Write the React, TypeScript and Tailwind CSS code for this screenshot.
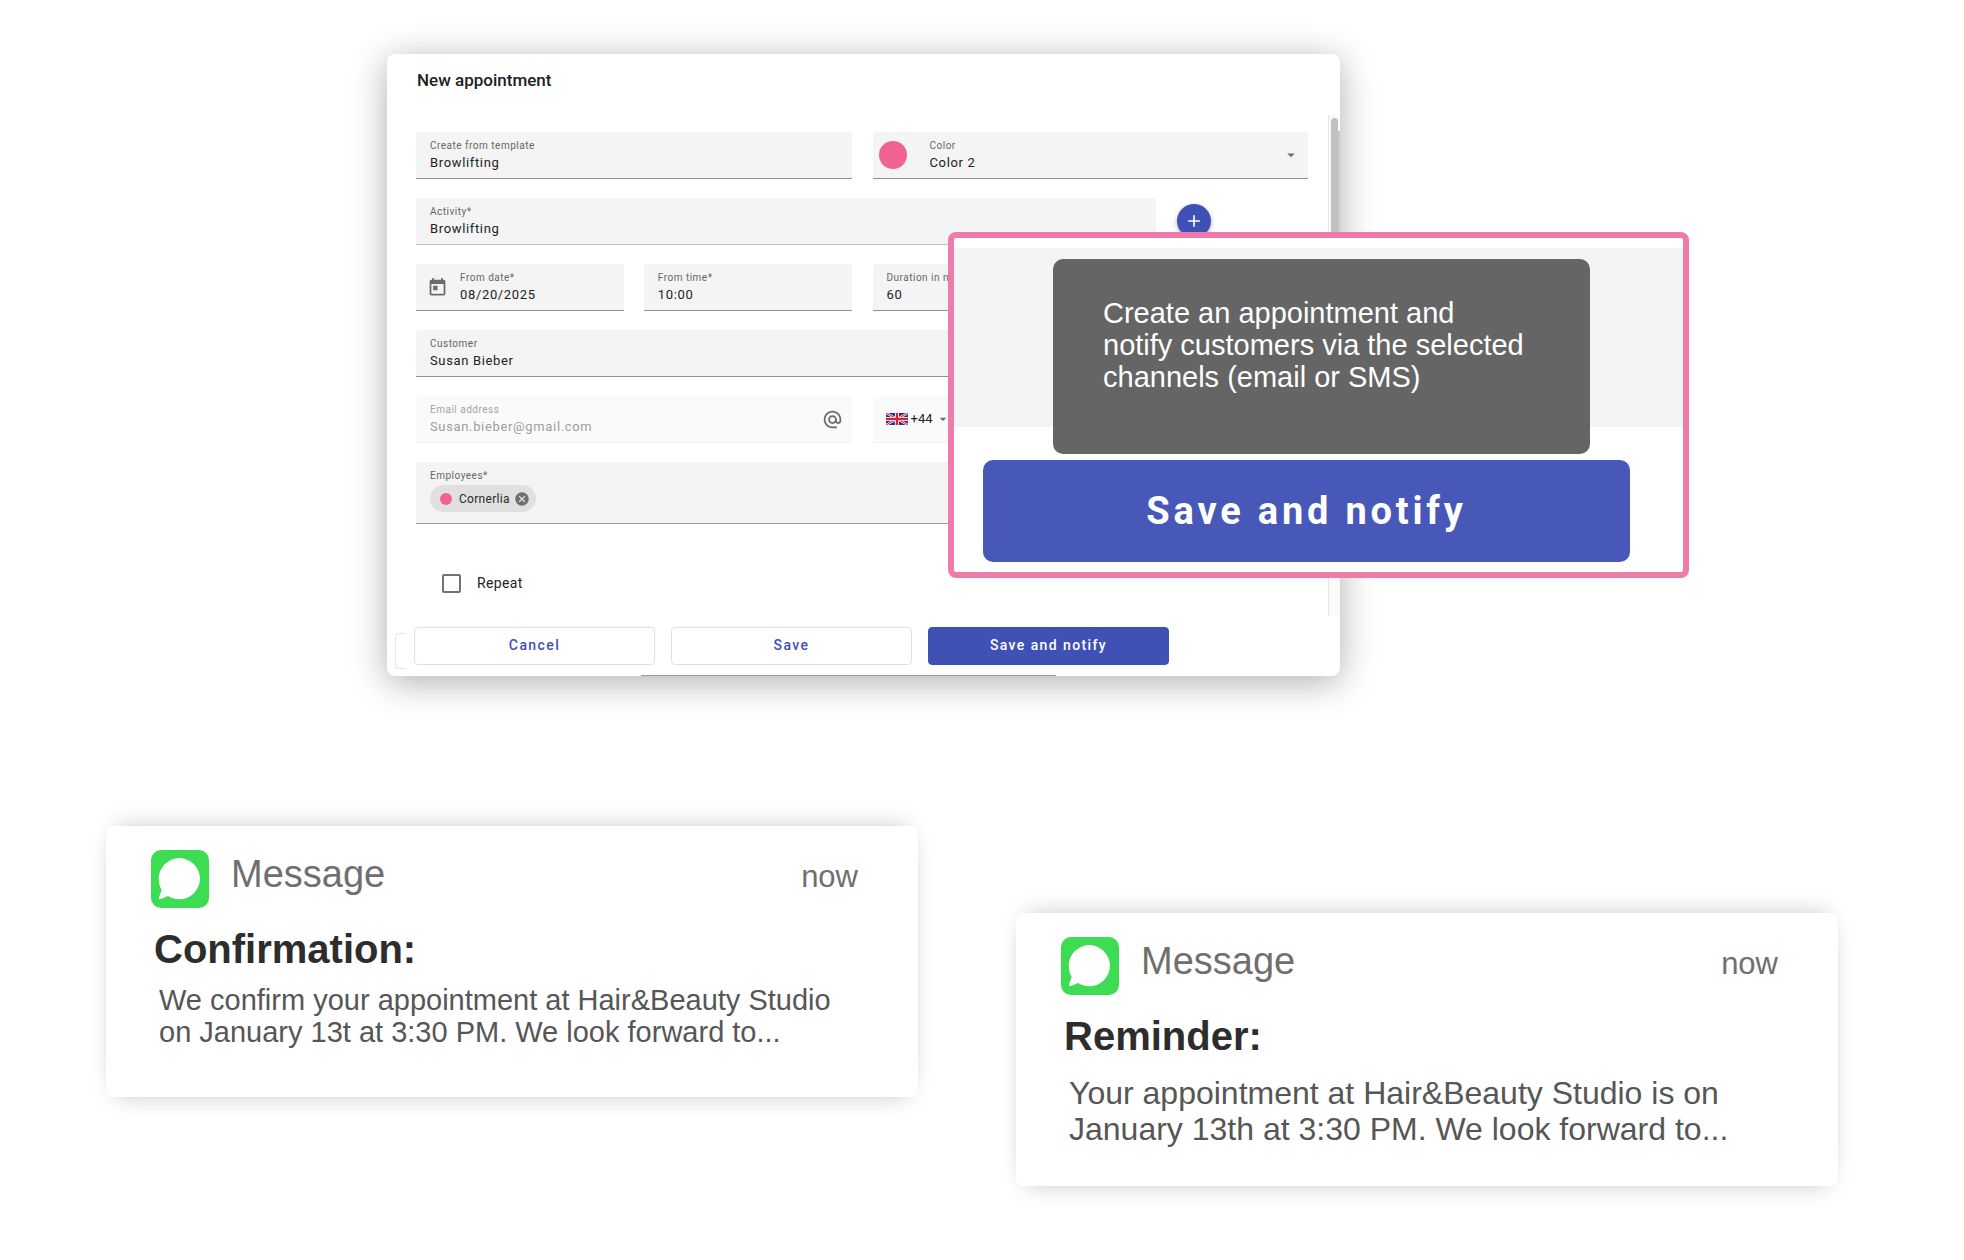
import type { ReactNode } from "react";
import { MdAdd, MdAlternateEmail, MdArrowDropDown, MdCancel, MdToday } from "react-icons/md";

const labelText = "block text-[10px] leading-3 tracking-wider";
const valueText = "mt-[3px] block w-full bg-transparent p-0 text-[13px] leading-4 tracking-wider outline-none";

function Shell({ children, light, className = "" }: { children: ReactNode; light?: boolean; className?: string }) {
  return (
    <div
      className={`flex items-center rounded-t border-b bg-[#f4f4f4] ${light ? "border-[#bdbdbd]" : "border-[#8f8f8f]"} ${className}`}
    >
      {children}
    </div>
  );
}

function TextField({
  id,
  label,
  value,
  icon,
  light,
  className = "",
}: {
  id: string;
  label: string;
  value: string;
  icon?: ReactNode;
  light?: boolean;
  className?: string;
}) {
  return (
    <Shell light={light} className={className}>
      {icon}
      <div className={`min-w-0 flex-1 pt-2 pr-3 pb-[7px] ${icon ? "pl-3" : "pl-[14px]"}`}>
        <label htmlFor={id} className={`${labelText} text-[#666]`}>
          {label}
        </label>
        <input id={id} defaultValue={value} className={`${valueText} text-[#222]`} />
      </div>
    </Shell>
  );
}

function UkFlag() {
  return (
    <svg viewBox="0 0 22 12" className="h-3 w-[22px]" aria-label="United Kingdom">
      <rect width="22" height="12" fill="#1f3a83" />
      <path d="M0 0L22 12M22 0L0 12" stroke="#fff" strokeWidth="2.2" />
      <path d="M0 0L22 12M22 0L0 12" stroke="#d8203a" strokeWidth="1" />
      <path d="M11 0V12M0 6H22" stroke="#fff" strokeWidth="4" />
      <path d="M11 0V12M0 6H22" stroke="#d8203a" strokeWidth="2.4" />
    </svg>
  );
}

function MessageIcon() {
  return (
    <svg viewBox="0 0 58 58" className="size-[58px] shrink-0" aria-hidden="true">
      <rect width="58" height="58" rx="10" fill="#3ddc52" />
      <circle cx="28.3" cy="28.7" r="20.6" fill="#fff" />
      <path d="M8.5 34C9 37 10 38.3 10.6 39.6C10.6 42.500 7.800 45.500 7.900 49.200C11 49 14 47.200 17 46L24 44L14 32Z" fill="#fff" />
    </svg>
  );
}

function AppointmentDialog() {
  return (
    <section
      aria-labelledby="dialog-title"
      className="relative col-start-2 rounded-lg bg-white font-[Roboto,sans-serif] shadow-[0_6px_36px_rgba(0,0,0,0.32)]"
    >
      <h1 id="dialog-title" className="pt-[14px] pb-[23px] pl-[30px] text-[17px] leading-6 font-medium text-[#212121]">
        New appointment
      </h1>

      <div className="flex">
        <form className="flex min-w-0 flex-1 flex-col gap-[19px] pt-[17px] pr-5 pb-[23px] pl-[29px]">
          <div className="grid grid-cols-2 gap-[21px]">
            <TextField id="template" label="Create from template" value="Browlifting" />
            <Shell>
              <span className="ml-[6px] size-7 shrink-0 rounded-full bg-[#f06292]" />
              <div className="min-w-0 flex-1 pt-2 pb-[7px] pl-[23px]">
                <label htmlFor="color" className={`${labelText} text-[#666]`}>
                  Color
                </label>
                <select id="color" className={`${valueText} appearance-none text-[#222]`}>
                  <option>Color 2</option>
                </select>
              </div>
              <MdArrowDropDown className="mr-2 size-[18px] text-[#6b6b6b]" />
            </Shell>
          </div>

          <div className="flex items-start gap-[21px] pr-[97px]">
            <TextField id="activity" label="Activity*" value="Browlifting" light className="flex-1" />
            <button
              type="button"
              aria-label="Add activity"
              className="mt-[6px] flex size-[34px] items-center justify-center rounded-full bg-[#3f51b5] text-white shadow-[0_2px_5px_rgba(0,0,0,0.3)]"
            >
              <MdAdd className="size-5" />
            </button>
          </div>

          <div className="grid grid-cols-2 gap-[21px]">
            <div className="grid grid-cols-2 gap-5">
              <TextField
                id="date"
                label="From date*"
                value="08/20/2025"
                icon={<MdToday className="ml-[11px] size-[21px] shrink-0 text-[#6b6b6b]" />}
              />
              <TextField id="time" label="From time*" value="10:00" />
            </div>
            <TextField id="duration" label="Duration in minutes*" value="60" />
          </div>

          <TextField id="customer" label="Customer" value="Susan Bieber" />

          <div className="grid grid-cols-2 gap-[21px]">
            <div className="flex items-center rounded-t border-b border-[#f0f0f0] bg-[#fafafa]">
              <div className="min-w-0 flex-1 pt-2 pb-[7px] pl-[14px]">
                <label htmlFor="email" className={`${labelText} text-[#a3a3a3]`}>
                  Email address
                </label>
                <input id="email" disabled defaultValue="Susan.bieber@gmail.com" className={`${valueText} text-[#9e9e9e]`} />
              </div>
              <MdAlternateEmail className="mr-[9px] size-[21px] text-[#6b6b6b]" />
            </div>
            <div className="flex items-center rounded-t border-b border-[#f0f0f0] bg-[#fafafa] pl-[13px]">
              <UkFlag />
              <select aria-label="Country code" className="ml-[3px] w-6 appearance-none bg-transparent text-[13px] leading-4 text-[#222]">
                <option>+44</option>
              </select>
              <MdArrowDropDown className="size-4 text-[#6b6b6b]" />
            </div>
          </div>

          <div className="rounded-t border-b border-[#a0a0a0] bg-[#f4f4f4] pt-2 pb-[11px] pl-[14px]">
            <span className={`${labelText} text-[#666]`}>Employees*</span>
            <div className="mt-[3px] flex">
              <span className="flex h-[27px] items-center rounded-full bg-[#e0e0e0] pr-[6px] pl-[10px] text-xs leading-4 tracking-wide text-[#2b2b2b]">
                <span className="mr-[7px] size-3 rounded-full bg-[#f06292]" />
                Cornerlia
                <button type="button" aria-label="Remove Cornerlia" className="ml-1 text-[#6f6f6f]">
                  <MdCancel className="size-4" />
                </button>
              </span>
            </div>
          </div>

          <label className="mt-[30px] flex items-center gap-4 pl-[26px] text-sm leading-5 tracking-wide text-[#222]">
            <input type="checkbox" className="size-[19px] appearance-none rounded-xs border-2 border-[#737373] bg-white" />
            Repeat
          </label>
        </form>

        <div className="flex w-3 border-l border-[#e6e6e6] bg-[#fafafa] pt-[3px]">
          <span className="ml-[2px] h-60 w-[7px] rounded-full bg-[#c1c1c1]" />
          <span className="mt-[13px] h-60 w-[2px] bg-[#c9c9c9]" />
        </div>
      </div>

      <footer className="grid grid-cols-3 gap-4 pt-[11px] pr-[171px] pb-[11px] pl-[27px] text-sm leading-[18px] font-medium tracking-widest">
        <button type="button" className="rounded border border-[#e0e0e0] pt-2 pb-[10px] text-[#3f51b5]">
          Cancel
        </button>
        <button type="button" className="rounded border border-[#e0e0e0] pt-2 pb-[10px] text-[#3f51b5]">
          Save
        </button>
        <button type="button" className="rounded border border-[#3f51b5] bg-[#3f51b5] pt-2 pb-[10px] text-white">
          Save and notify
        </button>
      </footer>
      <span className="absolute bottom-[7px] left-2 h-9 w-[11px] rounded-l border border-r-0 border-[#e6e6e6]" />
      <span className="absolute bottom-0 left-[254px] h-px w-[415px] bg-[#9a9a9a]" />

      <Callout />
    </section>
  );
}

function Callout() {
  return (
    <div className="absolute top-[178px] left-[561px] w-[741px] rounded-lg border-[6px] border-[#ee7ba8] bg-white pt-[10px] pb-[10px]">
      <div className="h-[179px] bg-[#f4f4f4] pt-[11px] pr-[93px] pl-[99px]">
        <p
          role="tooltip"
          className="h-[195px] rounded-[10px] bg-[#656565] pt-[38px] pl-[50px] font-['Liberation_Sans',Arial,sans-serif] text-[29px] leading-8 text-white"
        >
          Create an appointment and
          <br />
          notify customers via the selected
          <br />
          channels (email or SMS)
        </p>
      </div>
      <div className="mt-[33px] pr-[53px] pl-[29px]">
        <button type="button" className="w-full rounded-[10px] bg-[#4758b8] py-[27px] text-[38px] leading-[48px] font-bold tracking-widest text-white">
          Save and notify
        </button>
      </div>
    </div>
  );
}

function MessageCard({ title, children, className }: { title: string; children: ReactNode; className: string }) {
  return (
    <article
      className={`rounded-lg bg-white pt-6 pr-[60px] pl-[45px] font-['Liberation_Sans',Arial,sans-serif] shadow-[0_-10px_22px_-10px_rgba(0,0,0,0.2),0_10px_22px_-10px_rgba(0,0,0,0.2)] ${className}`}
    >
      <header className="flex items-start gap-[22px]">
        <MessageIcon />
        <div className="flex flex-1 items-baseline justify-between text-[#6f6f6f]">
          <span className="text-[38px] leading-[48px]">Message</span>
          <time className="text-[31px] leading-10">now</time>
        </div>
      </header>
      <h2 className="mt-[17px] pl-[3px] text-[40px] leading-[48px] font-bold text-[#2d2d2d]">{title}</h2>
      {children}
    </article>
  );
}

export default function App() {
  return (
    <main className="min-h-screen bg-white pt-[54px] pb-[74px]">
      <div className="grid grid-cols-[387fr_953fr_624fr]">
        <AppointmentDialog />
      </div>
      <div className="mt-[150px] grid grid-cols-[106fr_812fr_98fr_822fr_126fr] items-start">
        <MessageCard title="Confirmation:" className="col-start-2 pb-[49px]">
          <p className="mt-[11px] pl-2 text-[29px] leading-8 whitespace-nowrap text-[#565656]">
            We confirm your appointment at Hair&amp;Beauty Studio
            <br />
            on January 13t at 3:30 PM. We look forward to...
          </p>
        </MessageCard>
        <MessageCard title="Reminder:" className="col-start-4 mt-[87px] pb-[39px]">
          <p className="mt-[15px] pl-2 text-[32px] leading-9 whitespace-nowrap text-[#565656]">
            Your appointment at Hair&amp;Beauty Studio is on
            <br />
            January 13th at 3:30 PM. We look forward to...
          </p>
        </MessageCard>
      </div>
    </main>
  );
}
